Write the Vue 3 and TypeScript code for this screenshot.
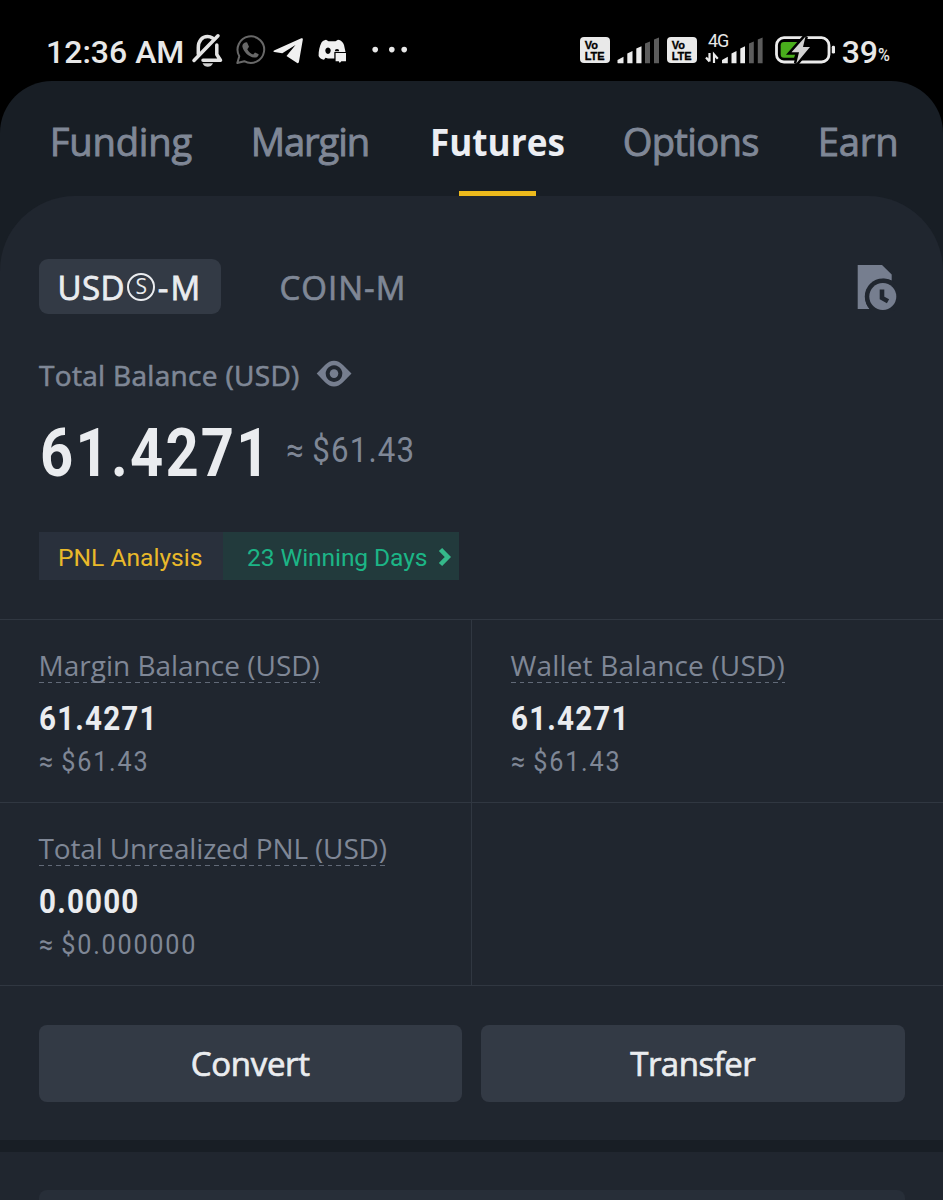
<script setup lang="ts">
interface Tab {
  id: string
  label: string
  active?: boolean
}

interface Stat {
  id: string
  label: string
  value: string
  fiat: string
}

const tabs: Tab[] = [
  { id: 'funding', label: 'Funding' },
  { id: 'margin', label: 'Margin' },
  { id: 'futures', label: 'Futures', active: true },
  { id: 'options', label: 'Options' },
  { id: 'earn', label: 'Earn' },
]

const stats: Stat[] = [
  { id: 'margin-balance', label: 'Margin Balance (USD)', value: '61.4271', fiat: '≈ $61.43' },
  { id: 'wallet-balance', label: 'Wallet Balance (USD)', value: '61.4271', fiat: '≈ $61.43' },
  { id: 'unrealized', label: 'Total Unrealized PNL (USD)', value: '0.0000', fiat: '≈ $0.000000' },
]
</script>

<template>
  <div class="screen">
    <div class="status">
      <span class="clock">12:36 AM</span>
      <svg class="status-icons" width="222" height="40" viewBox="190 30 222 40">
        <!-- muted bell -->
        <g fill="none" stroke="#e4e4e4" stroke-width="3.5" stroke-linejoin="round" stroke-linecap="round">
          <path d="M198.300 54V47.500C198.300 41 202 36.500 207.500 36.500C209.500 36.500 211 37 212.500 38" />
          <path d="M216.800 45V54.500L220.500 60.300H203" />
          <path d="M194 60.500L218 35.800" />
        </g>
        <path d="M202.500 63.300H213C212 65.800 210 66.800 207.800 66.800S203.500 65.800 202.500 63.300Z" fill="#d0d0d0" />
        <!-- messenger bubble -->
        <path d="M237.300 63L239.300 56.200A13.300 13.300 0 1 1 244.300 61.200Z" fill="none" stroke="#686868" stroke-width="2" stroke-linejoin="round" />
        <path d="M245.600 43.200L247.600 43.100L249.600 47.500L247.900 50C249 52.500 251.300 54.500 253.800 55.300L255.600 53.200L259.300 55C259 57.500 257.300 58.600 254.800 58.400C249.200 57.600 244.300 52.800 243 47.500C242.800 45.600 243.800 44 245.600 43.200Z" transform="translate(-.6 -.800)" fill="#686868" />
        <!-- paper plane -->
        <path d="M274 50.400L301.300 38.300C302.500 37.900 303 38.500 302.800 39.800L299 61.500C298.700 63.200 297.800 63.600 296.400 62.600L286.500 55.900L295.500 45L282.300 53.300L274.400 51.900C273.200 51.500 273.100 50.900 274 50.400Z" fill="#f0f0f0" />
        <!-- game pad mask with badge -->
        <path fill-rule="evenodd" d="M326 39.800L328.500 41.300H335.500L338 39.800C341 40.300 343 42 344 45L345.500 52H334.300V58.500H328L325.500 57.800L324 59.800C321.500 59.300 319.300 57.800 318.600 56C318.500 51 319.600 46 321.500 42.500C322.500 41 324 40.300 326 39.800ZM328 47.500A2.700 3.200 0 1 0 328.010 47.500ZM337 49A2.200 2.200 0 0 0 334.800 51.200H339.200A2.200 2.200 0 0 0 337 49Z" fill="#f0f0f0" />
        <path d="M335.600 53H346V61.300H341.300L339.800 63L338.800 61.300H335.600Z" fill="#f0f0f0" />
        <g fill="#e8e8e8">
          <circle cx="375.200" cy="49.600" r="2.800" />
          <circle cx="391.800" cy="49.600" r="2.800" />
          <circle cx="404.200" cy="49.600" r="2.800" />
        </g>
      </svg>
      <span class="spacer"></span>
      <span class="volte"><b>Vo</b><b>LTE</b></span>
      <svg class="bars" width="44" height="40" viewBox="616 30 44 40">
        <g fill="#ececec">
          <path d="M617.500 63V60L623.500 56.800V63.200H618Z" />
          <path d="M627.300 63.200V53.500L632.500 51V63.200Z" />
          <path d="M636.300 63.200V48.500L641.500 46.300V63.200Z" />
        </g>
        <path d="M645 63.200V43.500L650 41.500V63.200ZM654 63.200V39.500L659 37.500V63.200Z" fill="#5c5c5c" />
      </svg>
      <span class="volte second"><b>Vo</b><b>LTE</b></span>
      <svg class="network" width="59" height="40" viewBox="705 30 59 40">
        <text x="708" y="47.300" class="net-label">4G</text>
        <g stroke="#ececec" stroke-width="2.200" fill="none">
          <path d="M709.500 53V61.500M706 57.500L709.500 61.500" />
          <path d="M714 63V54.500L717.800 58.800" />
        </g>
        <g fill="#ececec">
          <path d="M722 63V60L727.800 56.800V63.200H722.300Z" />
          <path d="M731.500 63.200V53.500L736.500 51V63.200Z" />
          <path d="M740.300 63.200V48.500L745 46.300V63.200Z" />
        </g>
        <path d="M749 63.200V43.500L753.800 41.500V63.200ZM757.800 63.200V39.500L762.600 37.500V63.200Z" fill="#5c5c5c" />
      </svg>
      <svg class="battery" width="62" height="40" viewBox="774 30 62 40">
        <rect x="776.500" y="37.700" width="52.500" height="24.300" rx="7.500" fill="none" stroke="#ececec" stroke-width="2.800" />
        <path d="M784 42H800L794 57.800H784C781.800 57.800 780.700 56.500 780.700 54.500V45.300C780.700 43.200 781.800 42 784 42Z" fill="#49ad1c" />
        <path d="M805.500 36.500L791.500 52.300H799L796.300 63.500L810 47H803Z" fill="#d2d2d2" stroke="#000" stroke-width="5" paint-order="stroke" />
        <rect x="831.800" y="45.800" width="3.200" height="7.800" rx="1.400" fill="#ececec" />
      </svg>
      <span class="level">39</span><span class="percent">%</span>
    </div>

    <main class="wallet">
      <nav class="tabs">
        <div v-for="tab in tabs" :key="tab.id" class="tab" :class="[tab.id, { active: tab.active }]">
          <span>{{ tab.label }}</span>
        </div>
      </nav>

      <section class="panel">
        <div class="markets">
          <div class="chip"><span>USD</span><span class="ring">S</span><span class="suffix">-M</span></div>
          <span class="coin">COIN-M</span>
          <svg class="history" width="40" height="46" viewBox="857 265 40 46">
            <path d="M857.700 265H882L891.700 274.500V280.500A18.500 18.500 0 0 0 869.500 309H857.700Z" fill="#767e8f" />
            <circle cx="882.800" cy="296.500" r="18" fill="#20262f" />
            <circle cx="882.800" cy="296.500" r="13.500" fill="#767e8f" />
            <path d="M882 289.500V298L888 301.300" fill="none" stroke="#20262f" stroke-width="4.600" />
          </svg>
        </div>

        <div class="balance-label">
          <span>Total Balance (USD)</span>
          <svg width="36" height="28" viewBox="316.500 360 36 28">
            <path fill-rule="evenodd" d="M317.200 373.600L325.500 365C331 359.300 338 359.300 343.500 365L352 373.600L343.500 382.300C338 388 331 388 325.500 382.300ZM334.500 365.300A8.300 8.300 0 1 0 334.510 365.300Z" fill="#767e8f" />
            <circle cx="334.500" cy="373.600" r="4.300" fill="#767e8f" />
          </svg>
        </div>

        <div class="balance">
          <span class="amount">61.4271</span>
          <span class="fiat">≈ $61.43</span>
        </div>

        <div class="pnl">
          <span class="analysis">PNL Analysis</span>
          <span class="winning">
            <span>23 Winning Days</span>
            <svg width="14" height="20" viewBox="0 0 14 20"><path d="M2.500 2.500L9.800 10L2.500 17.500" fill="none" stroke="#35b98a" stroke-width="4.600" /></svg>
          </span>
        </div>

        <div class="grid">
          <div v-for="stat in stats" :key="stat.id" class="cell" :class="stat.id">
            <div class="name">{{ stat.label }}</div>
            <div class="value"><span>{{ stat.value }}</span></div>
            <div class="sub"><span>{{ stat.fiat }}</span></div>
          </div>
          <div class="cell"></div>
        </div>

        <div class="actions">
          <button class="convert" type="button">Convert</button>
          <button class="transfer" type="button">Transfer</button>
        </div>
      </section>

      <section class="next"><div class="card"></div></section>
    </main>
  </div>
</template>

<style>
html,
body {
  margin: 0;
  background: #000;
}
</style>

<style scoped>
.screen {
  width: 943px;
  height: 1200px;
  overflow: hidden;
  background: #000;
  color: #eaecef;
  font-family: "Open Sans", "Noto Sans", sans-serif;
  white-space: nowrap;
}

.status {
  display: flex;
  align-items: center;
  height: 81px;
  box-sizing: border-box;
  padding: 19px 52px 0 46px;
  font-family: Roboto, sans-serif;
  color: #e8e8e8;
}
.status svg {
  flex: none;
  display: block;
}
.clock {
  width: 144px;
  font-size: 32px;
  font-weight: 500;
  line-height: 40px;
  padding-top: 3px;
}
.spacer {
  flex: 1;
}
.volte {
  display: flex;
  flex-direction: column;
  width: 30px;
  height: 26px;
  box-sizing: border-box;
  padding: 1.500px 0 0 5px;
  margin-right: 6px;
  border-radius: 4px;
  background: #e9e9e9;
  color: #000;
  font-family: "Liberation Sans", sans-serif;
}
.volte b {
  height: 11.500px;
  font-size: 11px;
  font-weight: 700;
  line-height: 12px;
  -webkit-text-stroke: 0.300px #000;
}
.volte.second {
  margin-left: 7px;
  margin-right: 8px;
}
.net-label {
  fill: #e8e8e8;
  font: 400 18px Roboto, sans-serif;
  letter-spacing: -1px;
}
.battery {
  margin-left: 10px;
}
.level {
  margin-left: 6px;
  font-size: 32px;
  font-weight: 500;
  line-height: 40px;
  padding-top: 3px;
}
.percent {
  font-size: 17.500px;
  font-weight: 500;
  line-height: 20px;
  padding-top: 10px;
  letter-spacing: -1px;
  width: 13px;
  transform: scaleX(0.920);
  transform-origin: left;
}

.wallet {
  height: 1119px;
  background: #181e25;
  border-radius: 52px 52px 0 0;
}
.tabs {
  display: grid;
  grid-template-columns: 201px 179px 193px 195px auto;
  height: 115px;
  box-sizing: border-box;
  padding-left: 49.700px;
}
.tab {
  position: relative;
  padding-top: 34px;
  font-size: 38.200px;
  font-weight: 500;
  line-height: 52px;
  color: #7f8796;
  letter-spacing: -0.200px;
  -webkit-text-stroke: 0.900px #7f8796;
}
.tab.margin {
  letter-spacing: -1.100px;
}
.tab.options {
  letter-spacing: -0.700px;
}
.tab.active {
  color: #eceef3;
  font-weight: 700;
  letter-spacing: 0;
  -webkit-text-stroke: 0;
}
.tab.active span {
  display: inline-block;
  transform: scaleX(0.920);
  transform-origin: left;
}
.tab.active::after {
  content: "";
  position: absolute;
  left: 29.300px;
  bottom: 0;
  width: 77px;
  height: 5.500px;
  background: #ecb91c;
}

.panel {
  height: 944px;
  background: #20262f;
  border-radius: 75px 75px 0 0;
  box-sizing: border-box;
  padding-top: 63px;
}
.markets {
  display: flex;
  align-items: center;
  height: 55px;
  padding: 0 46px 0 38.500px;
  font-size: 33px;
  font-weight: 500;
}
.chip {
  display: flex;
  align-items: center;
  width: 182px;
  height: 55px;
  box-sizing: border-box;
  padding: 1px 0 0 19px;
  border-radius: 9px;
  background: #333a45;
  letter-spacing: 0.400px;
  -webkit-text-stroke: 0.800px #eaecef;
}
.ring {
  width: 28px;
  height: 28px;
  box-sizing: border-box;
  margin: 0 2.500px 0 2.500px;
  border: 2px solid #eaecef;
  border-radius: 50%;
  font-size: 21px;
  font-weight: 400;
  line-height: 23px;
  letter-spacing: 0;
  text-align: center;
  -webkit-text-stroke: 0;
}
.suffix {
  letter-spacing: 2px;
}
.coin {
  margin: 1px 0 0 59px;
  color: #7f8796;
  letter-spacing: 1px;
  -webkit-text-stroke: 0.700px #7f8796;
}
.history {
  margin-left: auto;
  margin-top: 2px;
}
.balance-label {
  display: flex;
  align-items: center;
  gap: 16.500px;
  height: 40px;
  margin: 41px 0 0 39px;
  color: #7f8796;
  font-size: 28px;
  font-weight: 500;
  line-height: 40px;
  letter-spacing: 0.320px;
  -webkit-text-stroke: 0.600px #7f8796;
}
.balance-label svg {
  margin-top: -2px;
}
.balance {
  display: flex;
  height: 80px;
  margin: 18px 0 0 39.500px;
  font-family: Roboto, sans-serif;
}
.amount {
  width: 246px;
  font-size: 66.500px;
  font-weight: 700;
  line-height: 80px;
  letter-spacing: 2.600px;
  transform: scaleX(0.870);
  transform-origin: left;
}
.fiat {
  color: #7f8796;
  font-size: 34.700px;
  line-height: 75px;
  letter-spacing: 1.300px;
  word-spacing: -1.500px;
  transform: scaleX(0.900);
  transform-origin: left;
}
.pnl {
  display: flex;
  width: 420px;
  height: 48px;
  margin: 39px 0 0 38.500px;
  font-family: Roboto, sans-serif;
  font-size: 24.600px;
  line-height: 51px;
}
.analysis {
  width: 184px;
  box-sizing: border-box;
  padding-left: 19.500px;
  background: #29303c;
  color: #e9b92a;
}
.winning {
  flex: 1;
  display: flex;
  align-items: flex-start;
  gap: 11px;
  padding-left: 24.500px;
  background: #223a3c;
  color: #1cb586;
  letter-spacing: -0.100px;
}
.winning svg {
  margin-top: 15px;
}
.grid {
  display: grid;
  grid-template-columns: 472px 471px;
  grid-template-rows: 183px 184px;
  margin-top: 39px;
}
.cell {
  box-sizing: border-box;
  border-top: 1px solid #303741;
  padding: 28px 0 0 38.500px;
}
.cell:nth-child(odd) {
  border-right: 1px solid #303741;
}
.cell:nth-child(n + 3) {
  border-bottom: 1px solid #303741;
}
.name {
  width: max-content;
  height: 35px;
  color: #7f8796;
  font-size: 28px;
  line-height: 34px;
  background: repeating-linear-gradient(90deg, #626a78 0 4.700px, transparent 4.700px 8.750px) left bottom / 100% 1.500px no-repeat;
}
.wallet-balance .name {
  letter-spacing: 0.170px;
}
.unrealized .name {
  letter-spacing: -0.150px;
}
.value {
  margin-top: 15px;
  font: 700 34px/40px Roboto, sans-serif;
  letter-spacing: 1.350px;
}
.value span,
.sub span {
  display: inline-block;
  transform: scaleX(0.870);
  transform-origin: left;
}
.sub {
  margin-top: 8px;
  color: #7f8796;
  font: 400 28px/32px Roboto, sans-serif;
  letter-spacing: 1.950px;
  word-spacing: -1.800px;
}
.sub span {
  transform: scaleX(0.900);
}
.actions {
  display: flex;
  gap: 19px;
  padding: 38.500px 38.500px 0;
}
.actions button {
  flex: 1;
  height: 77px;
  padding: 0;
  border: 0;
  border-radius: 8px;
  background: #333a45;
  color: #eaecef;
  font: 500 33px/77px "Open Sans", sans-serif;
  letter-spacing: -0.300px;
  -webkit-text-stroke: 0.700px #eaecef;
}
.actions .transfer {
  letter-spacing: -0.500px;
}
.next {
  height: 48px;
  margin-top: 12px;
  box-sizing: border-box;
  padding: 38px 38.500px 0;
  background: #20262f;
}
.card {
  height: 10px;
  border-radius: 8px 8px 0 0;
  background: #272e38;
}
</style>
